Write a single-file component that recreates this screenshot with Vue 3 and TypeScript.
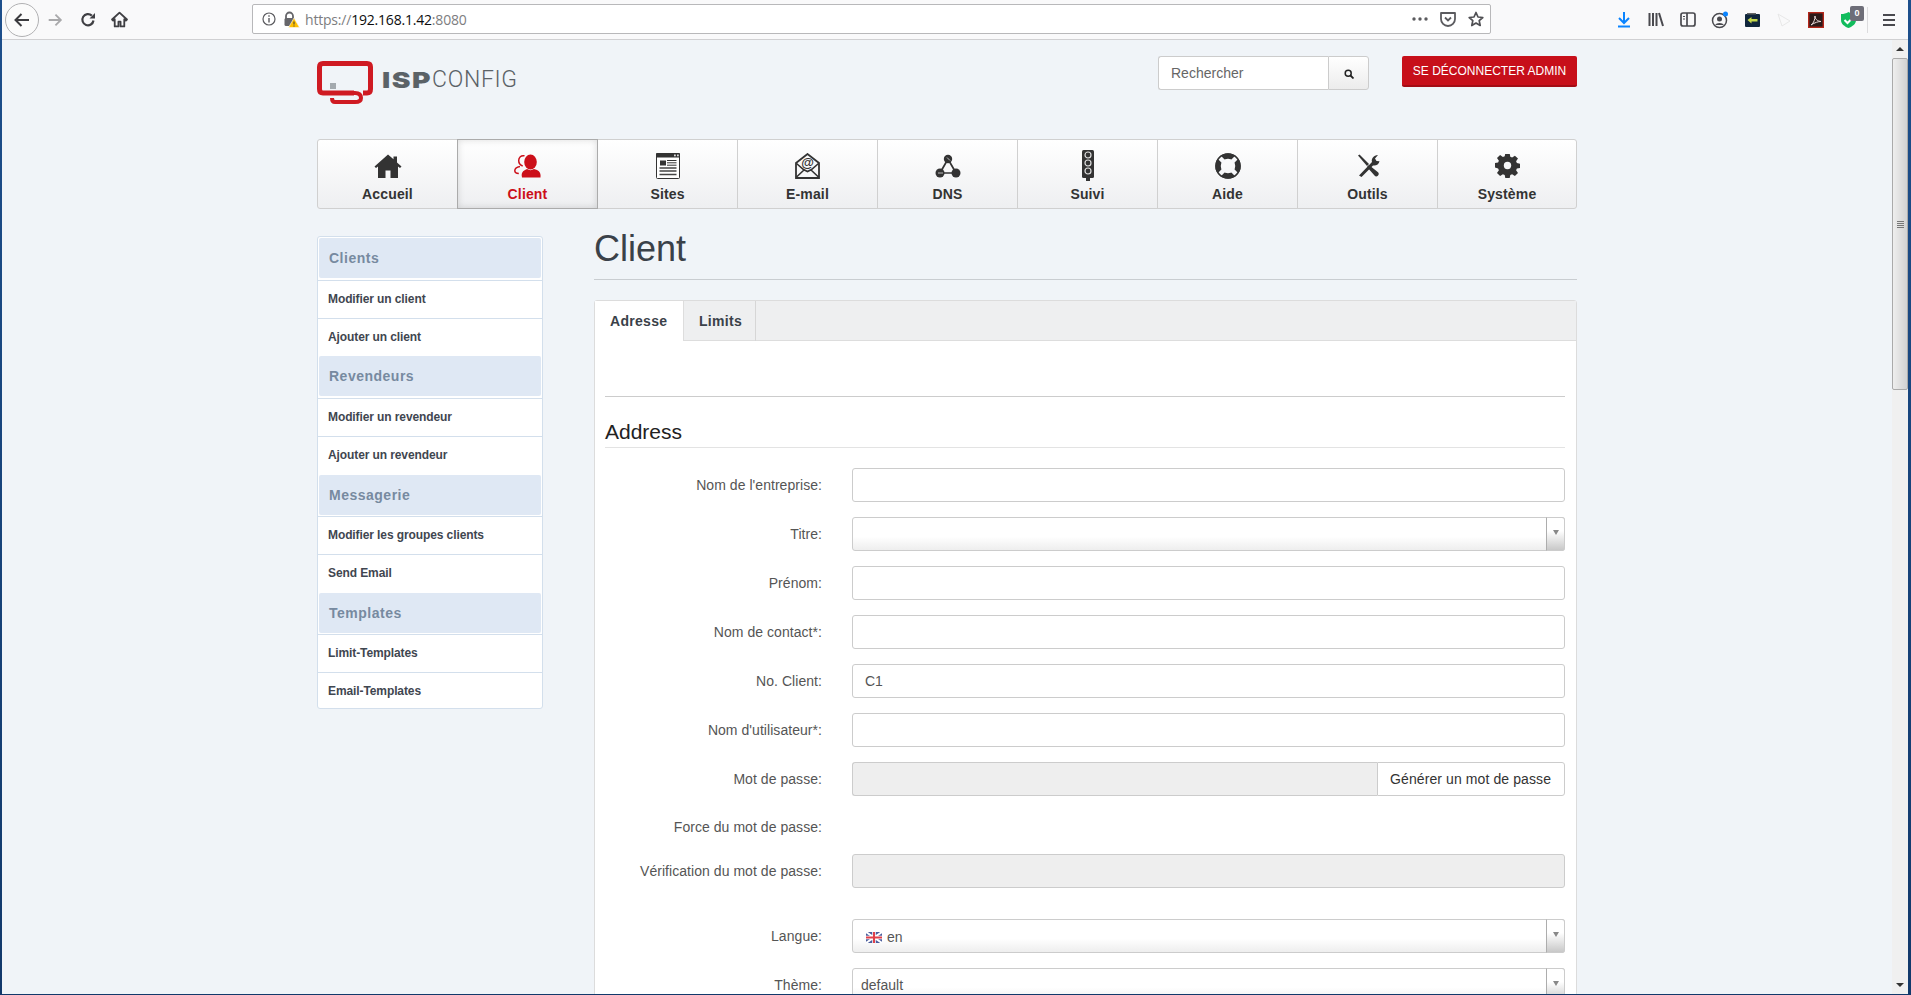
<script setup lang="ts">
interface NavItem { id: string; label: string; active?: boolean }
interface Group { title: string; items: string[] }
interface Row { label: string; value?: string; type: 'text' | 'select' }

const nav: NavItem[] = [
  { id: 'home', label: 'Accueil' },
  { id: 'client', label: 'Client', active: true },
  { id: 'sites', label: 'Sites' },
  { id: 'mail', label: 'E-mail' },
  { id: 'dns', label: 'DNS' },
  { id: 'monitor', label: 'Suivi' },
  { id: 'help', label: 'Aide' },
  { id: 'tools', label: 'Outils' },
  { id: 'system', label: 'Système' },
]

const groups: Group[] = [
  { title: 'Clients', items: ['Modifier un client', 'Ajouter un client'] },
  { title: 'Revendeurs', items: ['Modifier un revendeur', 'Ajouter un revendeur'] },
  { title: 'Messagerie', items: ['Modifier les groupes clients', 'Send Email'] },
  { title: 'Templates', items: ['Limit-Templates', 'Email-Templates'] },
]

const topRows: Row[] = [
  { label: "Nom de l'entreprise:", type: 'text' },
  { label: 'Titre:', type: 'select' },
  { label: 'Prénom:', type: 'text' },
  { label: 'Nom de contact*:', type: 'text' },
  { label: 'No. Client:', value: 'C1', type: 'text' },
  { label: "Nom d'utilisateur*:", type: 'text' },
]
</script>

<template>
  <div class="screen">
    <div class="window">
      <header class="browser">
        <div class="b-left">
          <span class="back">
            <svg width="20" height="20" viewBox="0 0 20 20"><path d="M17 10H4M9.5 4L3.5 10l6 6" fill="none" stroke="#3b3b3f" stroke-width="2"/></svg>
          </span>
          <svg class="fwd" width="18" height="18" viewBox="0 0 20 20"><path d="M3 10h13M10.5 4l6 6-6 6" fill="none" stroke="#a9a9ab" stroke-width="2"/></svg>
          <svg class="reload" width="16" height="16" viewBox="0 0 16 16"><path d="M13.5 8.5A5.6 5.6 0 1 1 11.8 3.6" fill="none" stroke="#3f3f43" stroke-width="2.2"/><path d="M9.5 6.5H15V1z" fill="#3f3f43"/></svg>
          <svg class="bhome" width="17" height="17" viewBox="0 0 16 16"><path d="M8 1.5L1 8l1 1 1.500-1.300V14.500h3.500V10h2v4.500h3.500V7.700L14 9l1-1z" fill="none" stroke="#3f3f43" stroke-width="1.700" stroke-linejoin="round"/></svg>
        </div>
        <div class="urlbar">
          <svg class="u-info" width="14" height="14" viewBox="0 0 14 14"><circle cx="7" cy="7" r="6" fill="none" stroke="#5b5b5f" stroke-width="1.200"/><path d="M7 6v4.500M7 3.200v1.500" stroke="#5b5b5f" stroke-width="1.400"/></svg>
          <svg class="u-lock" width="17" height="17" viewBox="0 0 17 17"><path d="M3 8V5a3.500 3.500 0 0 1 7 0v3" fill="none" stroke="#66666a" stroke-width="1.800"/><rect x="1.500" y="7" width="10" height="8" rx="1.500" fill="#66666a"/><path d="M11 7l5.500 9.500h-11z" fill="#ffc000" stroke="#f9f9fa" stroke-width=".6"/><path d="M11 10.500v3M11 14.500v1" stroke="#333" stroke-width="1"/></svg>
          <span class="u-text"><span class="u-dim">https://</span>192.168.1.42<span class="u-dim">:8080</span></span>
          <svg class="u-dots" width="16" height="4" viewBox="0 0 16 4"><circle cx="2" cy="2" r="1.700" fill="#5b5b5f"/><circle cx="8" cy="2" r="1.700" fill="#5b5b5f"/><circle cx="14" cy="2" r="1.700" fill="#5b5b5f"/></svg>
          <svg class="u-pocket" width="16" height="16" viewBox="0 0 16 16"><path d="M1 2h14v6a7 7 0 0 1-14 0z" fill="none" stroke="#5b5b5f" stroke-width="1.800" stroke-linejoin="round"/><path d="M5 6.500l3 3 3-3" fill="none" stroke="#5b5b5f" stroke-width="1.800"/></svg>
          <svg class="u-star" width="16" height="16" viewBox="0 0 16 16"><path d="M8 1.500l2 4.500 4.800.5-3.600 3.200 1 4.800L8 12l-4.200 2.500 1-4.800L1.200 6.500 6 6z" fill="none" stroke="#4f4f53" stroke-width="1.700" stroke-linejoin="round"/></svg>
        </div>
        <div class="b-right">
          <span class="b-ico"><svg width="16" height="17" viewBox="0 0 16 17"><path d="M8 1v10M3 7l5 5 5-5" fill="none" stroke="#0a84ff" stroke-width="2"/><path d="M2 15.500h12" stroke="#0a84ff" stroke-width="2"/></svg></span>
          <span class="b-ico"><svg width="16" height="15" viewBox="0 0 16 15"><path d="M1.500 1v13M5 1v13M8.500 1v13M11 1l4 13" stroke="#4a4a4f" stroke-width="2" fill="none"/></svg></span>
          <span class="b-ico"><svg width="16" height="15" viewBox="0 0 16 15"><rect x="1" y="1" width="14" height="13" rx="2" fill="none" stroke="#4a4a4f" stroke-width="1.700"/><path d="M7 1v13" stroke="#4a4a4f" stroke-width="1.700"/><path d="M3 4.500h2M3 7h2" stroke="#4a4a4f" stroke-width="1.200"/></svg></span>
          <span class="b-ico"><svg width="18" height="18" viewBox="0 0 18 18"><circle cx="8.500" cy="9.500" r="7" fill="none" stroke="#4a4a4f" stroke-width="1.500"/><circle cx="8.500" cy="8" r="2.500" fill="#4a4a4f"/><path d="M4 14a5 3.500 0 0 1 9 0z" fill="#4a4a4f"/><circle cx="14.500" cy="3" r="2.500" fill="#0a84ff"/></svg></span>
          <span class="b-ico"><svg width="15" height="14" viewBox="0 0 15 14"><rect width="15" height="13" y="1" rx="1" fill="#10263c"/><rect x="2" y="0" width="9" height="1.500" fill="#666"/><path d="M2.500 7l4-3v2h6v2.500h-6v2z" fill="#c6d94a"/></svg></span>
          <span class="b-ico"><svg width="14" height="14" viewBox="0 0 14 14"><path d="M1 1l12 7-8 5z" fill="none" stroke="#e8e8e8" stroke-width="1"/></svg></span>
          <span class="b-ico"><svg width="16" height="16" viewBox="0 0 16 16"><rect x=".7" y=".7" width="14.600" height="14.600" fill="#2b1a1a" stroke="#b3261a" stroke-width="1.400"/><path d="M3 13c3-2 4-6 4-9 0 3 2 5 6 5.500-3 0-6 1-10 3.500z" fill="none" stroke="#e8d8d8" stroke-width="1"/></svg></span>
          <span class="b-ico shield">
            <svg width="15" height="16" viewBox="0 0 15 16"><path d="M7.500 0C5 1.500 3 2 0 2v6c0 4 3.500 6.500 7.500 8 4-1.500 7.500-4 7.500-8V2c-3 0-5-.5-7.500-2z" fill="#12bc5d"/><path d="M3.500 8l3 3 5-5" fill="none" stroke="#fff" stroke-width="2"/></svg>
            <span class="badge">0</span>
          </span>
          <span class="b-sep"></span>
          <svg class="burger" width="14" height="14" viewBox="0 0 14 14"><path d="M1 2h12M1 7h12M1 12h12" stroke="#4a4a4f" stroke-width="2"/></svg>
        </div>
      </header>

      <div class="viewport">
        <div class="page">
          <div class="container">
            <div class="top">
              <div class="logo">
                <svg width="58" height="44" viewBox="0 0 58 44">
                  <path d="M37 32H6Q2.500 32 2.500 28V6Q2.500 2.500 6 2.500H50Q53.500 2.500 53.500 6V28Q53.500 32 50 32H46" fill="none" stroke="#cf1a22" stroke-width="5"/>
                  <path d="M17 32H38Q44 32 44 37Q44 41 38 41H18Q15 41 15 37" fill="none" stroke="#cf1a22" stroke-width="4"/>
                  <rect x="13" y="22" width="6" height="6" fill="#a3a9ae"/>
                </svg>
                <span class="logo-text"><b>ISP</b><span>CONFIG</span></span>
              </div>
              <div class="search">
                <div class="s-input">Rechercher</div>
                <div class="s-btn">
                  <svg width="10" height="10" viewBox="0 0 10 10"><circle cx="4.200" cy="4.200" r="3" fill="none" stroke="#222" stroke-width="1.500"/><path d="M6.500 6.500l3 3" stroke="#222" stroke-width="1.800"/></svg>
                </div>
              </div>
              <div class="logout">SE DÉCONNECTER ADMIN</div>
            </div>

            <nav class="nav">
              <div v-for="n in nav" :key="n.id" class="nav-cell" :class="{ active: n.active }">
                <div class="nav-icon">
                  <svg v-if="n.id === 'home'" width="28" height="24" viewBox="0 0 28 24"><path d="M14 .5L.5 12.500 2 14l2-1.500V24h7.500v-7.500h5V24H24V12.500l2 1.500 1.500-1.500L23 8.500V2.500h-3.500v2.700z" fill="#333"/></svg>
                  <svg v-else-if="n.id === 'client'" width="28" height="24" viewBox="0 0 28 24">
                    <path d="M10.500 1.800C7 1 4.700 3.500 4.700 6.500c0 2.500 1.300 4.500 4 5.500" fill="none" stroke="#cc0f19" stroke-width="1.500"/>
                    <path d="M6 12.500C2.500 13 .8 15 .8 16.800c0 1.700 1.500 2.700 4 2.700" fill="none" stroke="#cc0f19" stroke-width="1.500"/>
                    <ellipse cx="16.500" cy="8" rx="6.300" ry="7.600" fill="#cc0f19"/>
                    <path d="M8 23.500c-1-3.500 0-6 3-7.500l2-1c2.200 1.500 4.800 1.500 7 0l3 1c3 1.500 4 4 3.500 7.500z" fill="#cc0f19"/>
                  </svg>
                  <svg v-else-if="n.id === 'sites'" width="24" height="26" viewBox="0 0 24 26">
                    <rect x=".5" y=".5" width="23" height="25" rx="1" fill="#fff" stroke="#333"/>
                    <rect width="24" height="4.500" rx="1" fill="#333"/>
                    <rect x="18" y="1.500" width="1.800" height="1.800" fill="#ddd"/><rect x="21" y="1.500" width="1.800" height="1.800" fill="#ddd"/>
                    <rect x="4" y="7.500" width="6" height="5" fill="#333"/>
                    <path d="M11 7.500h9.500M11 9.800h9.500M11 12.200h9.500" stroke="#333" stroke-width="1"/>
                    <path d="M3.500 15h17M3.500 18h17M3.500 21.500h17" stroke="#444" stroke-width="1.600"/>
                  </svg>
                  <svg v-else-if="n.id === 'mail'" width="25" height="26" viewBox="0 0 25 26">
                    <path d="M1 10L12.500 1 24 10v15H1z" fill="none" stroke="#333" stroke-width="1.800"/>
                    <path d="M1 24.500l8.500-8M24 24.500l-8.500-8M1.500 10.500l7 6 4 2 4-2 7-6" fill="none" stroke="#333" stroke-width="1.600"/>
                    <text x="12.500" y="14" text-anchor="middle" font-size="13" font-weight="700" fill="#333">@</text>
                  </svg>
                  <svg v-else-if="n.id === 'dns'" width="26" height="24" viewBox="0 0 26 24">
                    <path d="M13 5L5 19h16z" fill="none" stroke="#333" stroke-width="1.700"/>
                    <circle cx="13" cy="5" r="4.200" fill="#333"/><circle cx="5" cy="19" r="4.500" fill="#333"/><circle cx="21" cy="19" r="4.500" fill="#333"/>
                    <path d="M12 3.500l3 3M3 19h5" stroke="#bbb" stroke-width="1"/>
                  </svg>
                  <svg v-else-if="n.id === 'monitor'" width="12" height="31" viewBox="0 0 12 31">
                    <rect width="12" height="28" rx="1.500" fill="#333"/><rect x="4" y="28" width="4" height="3" fill="#333"/>
                    <circle cx="6" cy="5" r="3" fill="none" stroke="#ddd" stroke-width="1.200"/><circle cx="6" cy="13" r="3" fill="none" stroke="#ddd" stroke-width="1.200"/><circle cx="6" cy="21" r="3" fill="#333" stroke="#ddd" stroke-width="1.200"/>
                  </svg>
                  <svg v-else-if="n.id === 'help'" width="26" height="26" viewBox="0 0 26 26">
                    <circle cx="13" cy="13" r="10" fill="none" stroke="#333" stroke-width="5.500"/>
                    <g stroke="#f7f8fa" stroke-width="4.500"><path d="M4.500 4.500l4.500 4.500M21.500 4.500L17 9M4.500 21.500L9 17M21.500 21.500L17 17"/></g>
                    <circle cx="13" cy="13" r="12" fill="none" stroke="#333" stroke-width="1.500"/>
                  </svg>
                  <svg v-else-if="n.id === 'tools'" width="24" height="23" viewBox="0 0 24 23">
                    <path d="M2 1.500l1.500-1L13 10l-2 2z" fill="#333"/>
                    <path d="M13 11l-2 2 7.500 8.500a2.300 2.300 0 0 0 3.500-3.200z" fill="#333"/>
                    <path d="M3 21.500L16 8c-1-3 1.500-7 6-7l-3 3.500 1.500 2.500 3 .3C23 10.500 20 12 17 11.500L5.500 23z" fill="#333"/>
                  </svg>
                  <svg v-else width="25" height="24" viewBox="0 0 25 24">
                    <path d="M10.300 0h4.400l.6 3.300 1.800.8 2.800-1.900 3.100 3-1.900 2.800.8 1.800 3.100.6v4.400l-3.100.6-.8 1.800 1.900 2.800-3.100 3-2.800-1.900-1.800.8-.6 3.100h-4.400l-.6-3.100-1.800-.8-2.800 1.900-3.100-3 1.900-2.800-.8-1.800L0 14.200V9.800l3.100-.6.8-1.800L2 4.600l3.100-3 2.800 1.900 1.800-.8z" fill="#333" transform="translate(0 -.5) scale(1 .98)"/>
                    <circle cx="12.500" cy="11.500" r="3.700" fill="#f6f7f9"/>
                  </svg>
                </div>
                <span class="nav-label">{{ n.label }}</span>
              </div>
            </nav>

            <div class="columns">
              <aside class="side">
                <div v-for="g in groups" :key="g.title" class="s-group">
                  <div class="s-head">{{ g.title }}</div>
                  <div v-for="it in g.items" :key="it" class="s-item">{{ it }}</div>
                </div>
              </aside>

              <main class="main">
                <h1 class="title">Client</h1>
                <section class="panel">
                  <div class="tabs">
                    <div class="tab on">Adresse</div>
                    <div class="tab">Limits</div>
                  </div>
                  <div class="body">
                    <hr class="rule" />
                    <h3 class="sub">Address</h3>
                    <div class="form">
                      <div v-for="r in topRows" :key="r.label" class="row">
                        <label class="lab">{{ r.label }}</label>
                        <div v-if="r.type === 'text'" class="inp">{{ r.value }}</div>
                        <div v-else class="sel"><span class="sel-arrow"><i></i></span></div>
                      </div>
                      <div class="row">
                        <label class="lab">Mot de passe:</label>
                        <div class="group">
                          <div class="inp off joined"></div>
                          <div class="gen">Générer un mot de passe</div>
                        </div>
                      </div>
                      <div class="row short">
                        <label class="lab">Force du mot de passe:</label>
                      </div>
                      <div class="row gap-after">
                        <label class="lab">Vérification du mot de passe:</label>
                        <div class="inp off"></div>
                      </div>
                      <div class="row">
                        <label class="lab">Langue:</label>
                        <div class="sel">
                          <svg class="flag" width="16" height="11" viewBox="0 0 16 11">
                            <rect width="16" height="11" fill="#4a5c9c"/>
                            <path d="M0 0l16 11M16 0L0 11" stroke="#fff" stroke-width="2"/>
                            <path d="M8 0v11M0 5.500h16" stroke="#fff" stroke-width="3.500"/>
                            <path d="M8 0v11M0 5.500h16" stroke="#e0404a" stroke-width="2"/>
                          </svg>
                          <span class="sel-t">en</span>
                          <span class="sel-arrow"><i></i></span>
                        </div>
                      </div>
                      <div class="row">
                        <label class="lab">Thème:</label>
                        <div class="sel plain"><span class="sel-t">default</span><span class="sel-arrow"><i></i></span></div>
                      </div>
                    </div>
                  </div>
                </section>
              </main>
            </div>
          </div>
        </div>
        <div class="scrollbar">
          <span class="sb-up"></span>
          <div class="sb-thumb"><i></i></div>
          <span class="sb-fill"></span>
          <span class="sb-down"></span>
        </div>
      </div>
    </div>
  </div>
</template>

<style>
html, body { margin: 0; overflow: hidden; }
</style>

<style scoped>
.screen {
  width: 1911px; height: 995px; overflow: hidden; box-sizing: border-box;
  background: linear-gradient(180deg, #1d4f8c, #12396b);
  padding: 0 3px 1px 2px;
  font-family: "Liberation Sans", Arial, sans-serif;
}
.window { height: 100%; display: flex; flex-direction: column; background: #f0f4f8; }

.browser {
  height: 40px; box-sizing: border-box; flex: none; display: flex; align-items: center;
  background: #f9f9fa; border-bottom: 1px solid #d0d0d2;
}
.b-left { width: 250px; flex: none; display: flex; align-items: center; padding-left: 3px; box-sizing: border-box; }
.back {
  width: 34px; height: 34px; box-sizing: border-box; border: 1px solid #b1b1b3; border-radius: 50%;
  background: #fbfbfb; display: flex; align-items: center; justify-content: center;
}
.fwd { margin-left: 7px; }
.reload { margin-left: 16px; }
.bhome { margin-left: 15px; }
.urlbar {
  width: 1239px; height: 30px; box-sizing: border-box; flex: none; display: flex; align-items: center;
  background: #fff; border: 1px solid #b8b8ba; border-radius: 2px; padding: 0 6px 0 9px; margin-top: -1px;
}
.u-lock { margin-left: 7px; }
.u-text { margin-left: 5px; font-family: "Open Sans", sans-serif; font-size: 14px; letter-spacing: -.2px; color: #0c0c0d; }
.u-dim { color: #7d7d80; }
.u-dots { margin-left: auto; }
.u-pocket { margin-left: 12px; }
.u-star { margin-left: 12px; }
.b-right { flex: 1; display: flex; align-items: center; padding-left: 117px; height: 100%; }
.b-ico { width: 32px; flex: none; display: flex; align-items: center; justify-content: center; position: relative; }
.shield .badge {
  position: absolute; left: 18px; top: -6px; width: 14px; height: 15px; border-radius: 2px;
  background: #6e6e78; color: #fff; font-size: 9px; font-weight: 700; text-align: center; line-height: 15px;
}
.b-sep { width: 1px; height: 26px; background: #dcdcde; margin-left: 3px; }
.burger { margin-left: 14px; }

.viewport { flex: 1; min-height: 0; display: flex; }
.page { flex: 1; min-width: 0; overflow: hidden; }
.container { width: 1260px; margin: 0 auto; }

.top { display: flex; align-items: flex-start; padding-top: 16px; height: 34px; }
.logo { display: flex; align-items: flex-start; margin-top: 5px; }
.logo-text { display: flex; margin: 5px 0 0 7px; font-family: Roboto, sans-serif; font-size: 23px; line-height: 28px; color: #5b6267; white-space: nowrap; }
.logo-text b {
  display: inline-block; font-family: Inter, sans-serif; font-weight: 900; letter-spacing: 1.2px; font-size: 22px;
  transform: scaleX(1.28); transform-origin: 0 50%; margin-right: 11px;
}
.logo-text span { font-weight: 300; letter-spacing: .65px; }
.search { margin-left: auto; display: flex; }
.s-input {
  width: 170px; height: 34px; box-sizing: border-box; background: #fff; border: 1px solid #ccc; border-right: 0;
  border-radius: 3px 0 0 3px; padding-left: 12px; font-size: 14px; line-height: 32px; color: #666;
}
.s-btn {
  width: 41px; height: 34px; box-sizing: border-box; border: 1px solid #ccc; border-radius: 0 3px 3px 0;
  background: linear-gradient(#fff, #ececec); display: flex; align-items: center; justify-content: center; padding-top: 2px;
}
.logout {
  margin-left: 33px; width: 175px; height: 31px; box-sizing: border-box; background: #c70f1a; border-bottom: 2px solid #a30c15;
  border-radius: 2px; color: #fff; font-size: 12px; line-height: 30px; text-align: center; white-space: nowrap;
}

.nav {
  margin-top: 49px; height: 70px; box-sizing: border-box; display: flex; border: 1px solid #d0d0d0; border-radius: 3px;
  background: linear-gradient(#fff, #eeeff1);
}
.nav-cell { flex: 0 0 140px; box-sizing: border-box; position: relative; text-align: center; border-right: 1px solid #d0d0d0; }
.nav-cell:last-child { flex: 1; border-right: 0; }
.nav-cell.active {
  flex: 0 0 141px;
  margin: -1px 0 -1px -1px; border: 1px solid #ababab; border-radius: 0;
  box-shadow: inset 0 0 7px rgba(0, 0, 0, .14); color: #cc0f19;
}
.nav-icon { height: 33px; margin-top: 9px; display: flex; align-items: center; justify-content: center; }
.nav-label { display: block; margin-top: 4px; font-size: 14px; font-weight: 700; line-height: 16px; color: #333; letter-spacing: .15px; }
.active .nav-label { color: #cc0f19; }
.active .nav-icon { margin-top: 9px; }

.columns { display: flex; align-items: flex-start; gap: 51px; margin-top: 27px; }
.side {
  width: 226px; flex: none; box-sizing: border-box; background: #fff; border: 1px solid #d3dfec; border-radius: 3px;
  padding: 1px 1px 0;
}
.s-group:nth-child(3) { margin-top: 1px; }
.s-group:nth-child(4) { margin-top: 1px; }
.s-head {
  height: 40px; margin: 0 0 2px; border-radius: 2px; background: #dfe8f4; color: #778aa0; font-size: 14px; font-weight: 700;
  line-height: 40px; padding-left: 10px; letter-spacing: .5px;
}
.s-group:nth-child(n + 3) .s-head { margin-bottom: 1px; }
.s-item {
  height: 38px; box-sizing: border-box; margin: 0 -1px; border-top: 1px solid #d3dfec; padding-left: 10px;
  font-size: 12px; font-weight: 700; line-height: 36px; color: #3f4650; letter-spacing: -.1px;
}
.s-group:last-child .s-item:first-of-type { height: 39px; }
.s-group:last-child .s-item:last-child { height: 36px; }

.main { flex: 1; min-width: 0; }
.title {
  margin: 0; height: 43px; font-size: 36px; font-weight: 400; line-height: 25px; color: #3a4149; border-bottom: 1px solid #c9cdd1;
}
.panel { margin-top: 20px; background: #fff; border: 1px solid #dcdcdc; border-radius: 3px 3px 0 0; }
.tabs { display: flex; height: 40px; box-sizing: border-box; background: #eeeff0; border-bottom: 1px solid #ddd; }
.tab {
  height: 40px; box-sizing: border-box; padding: 0 15px; border-right: 1px solid #d6d6d6; font-size: 14px; font-weight: 700;
  line-height: 40px; color: #3a4149; letter-spacing: .3px;
}
.tab.on { width: 89px; background: #fff; border-right: 1px solid #ddd; padding-right: 0; }
.tab:not(.on) { width: 72px; }
.body { padding: 55px 11px 0 10px; }
.rule { margin: 0; border: 0; border-top: 1px solid #ccc; }
.sub {
  margin: 23px 0 0; padding-bottom: 3px; font-size: 21px; font-weight: 400; line-height: 24px; color: #222; border-bottom: 1px solid #e3e3e3;
}
.form { margin-top: 20px; }
.row { display: flex; align-items: center; margin-bottom: 15px; min-height: 34px; }
.row.short { min-height: 28px; }
.row.short .lab { padding-top: 4px; }
.row.gap-after { margin-bottom: 31px; }
.lab { width: 217px; flex: none; text-align: right; font-size: 14px; color: #555; letter-spacing: .05px; }
.inp, .sel {
  margin-left: 30px; flex: 1; height: 34px; box-sizing: border-box; border: 1px solid #ccc; border-radius: 3px;
  background: #fff; font-size: 14px; line-height: 32px; color: #555; padding-left: 12px;
}
.inp.off { background: #eee; }
.inp.joined { margin-left: 0; border-radius: 3px 0 0 3px; border-right: 0; }
.group { margin-left: 30px; flex: 1; display: flex; }
.gen {
  width: 188px; height: 34px; box-sizing: border-box; border: 1px solid #ccc; border-radius: 0 3px 3px 0; background: #fff;
  font-size: 14px; line-height: 32px; color: #333; padding-left: 12px; white-space: nowrap; letter-spacing: .1px;
}
.sel {
  position: relative; display: flex; align-items: center; padding-left: 13px;
  background: linear-gradient(#fff 58%, #eee);
}
.sel.plain { padding-left: 8px; }
.sel-t { margin-left: 5px; padding-top: 2px; line-height: 16px; }
.sel.plain .sel-t { margin-left: 0; padding-top: 0; }
.sel-arrow {
  position: absolute; right: -1px; top: -1px; bottom: -1px; width: 19px; box-sizing: border-box; border: 1px solid #ccc; border-left-color: #adadad;
  border-radius: 0 3px 3px 0; background: linear-gradient(#fff 40%, #c8c8c8); display: flex; align-items: center; justify-content: center;
}
.sel-arrow i { width: 0; height: 0; margin-top: -3px; border: 3.500px solid transparent; border-top: 5px solid #888; border-bottom: 0; }
.flag { flex: none; margin-top: 2px; }

.scrollbar { width: 16px; flex: none; display: flex; flex-direction: column; align-items: center; background: #f0f0f0; }
.sb-up, .sb-down { flex: none; width: 0; height: 0; border: 4px solid transparent; }
.sb-up { margin-top: 7px; border-bottom: 4px solid #333; border-top: 0; }
.sb-down { margin-bottom: 7px; border-top: 4px solid #333; border-bottom: 0; }
.sb-thumb {
  margin-top: 7px; width: 100%; height: 332px; flex: none; box-sizing: border-box; border: 1px solid #aaa; border-radius: 2px;
  background: linear-gradient(90deg, #eee, #d2d2d2); display: flex; align-items: center; justify-content: center;
}
.sb-thumb i { width: 7px; height: 7px; background: repeating-linear-gradient(#777 0 1px, transparent 1px 2px); }
.sb-fill { flex: 1; }
</style>
